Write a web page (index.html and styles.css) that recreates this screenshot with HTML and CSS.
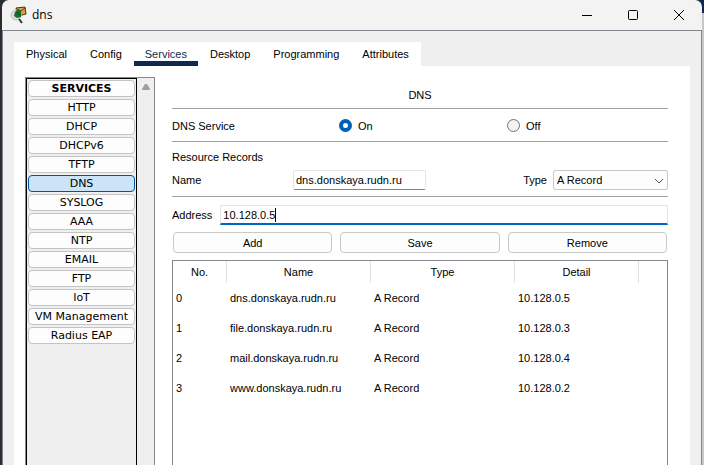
FILE: index.html
```html
<!DOCTYPE html>
<html lang="en">
<head>
<meta charset="utf-8">
<title>dns</title>
<link rel="stylesheet" href="styles.css">
</head>
<body>
<div class="window">
  <header class="titlebar">
    <svg class="app-icon" width="18" height="18" viewBox="0 0 18 18" aria-hidden="true">
      <path d="M6 2 15 1 16 8 8 10z" fill="#d9a33c" stroke="#4a3210"/>
      <path d="M6 3 11 5 15 2" fill="none" stroke="#5b3d12"/>
      <circle cx="6" cy="9" r="5" fill="#dcdedb" stroke="#c3c6c3"/>
      <path d="M5 6 8 3 11 5V11L7 12 4 10z" fill="#14712b"/>
      <path d="M7 6 10 9" stroke="#0b3f17"/>
      <path d="M9 13 12 17" stroke="#30343a" stroke-width="2"/>
    </svg>
    <span class="title">dns</span>
    <div class="controls">
      <button type="button" aria-label="Minimize"><svg width="12" height="12" viewBox="0 0 12 12"><path d="M1 6.5H11" stroke="#000"/></svg></button>
      <button type="button" aria-label="Maximize"><svg width="12" height="12" viewBox="0 0 12 12"><rect x="1.5" y="1.5" width="9" height="9" rx="1" fill="none" stroke="#000"/></svg></button>
      <button type="button" aria-label="Close"><svg width="12" height="12" viewBox="0 0 12 12"><path d="M1 1 11 11M11 1 1 11" stroke="#000"/></svg></button>
    </div>
  </header>
  <main class="client">
    <nav class="tabs">
      <button type="button">Physical</button>
      <button type="button">Config</button>
      <button type="button" class="active">Services</button>
      <button type="button">Desktop</button>
      <button type="button">Programming</button>
      <button type="button">Attributes</button>
    </nav>
    <section class="panel">
      <aside class="sidebar">
        <div class="services">
          <button type="button" class="heading">SERVICES</button>
          <button type="button">HTTP</button>
          <button type="button">DHCP</button>
          <button type="button">DHCPv6</button>
          <button type="button">TFTP</button>
          <button type="button" class="selected">DNS</button>
          <button type="button">SYSLOG</button>
          <button type="button">AAA</button>
          <button type="button">NTP</button>
          <button type="button">EMAIL</button>
          <button type="button">FTP</button>
          <button type="button">IoT</button>
          <button type="button">VM Management</button>
          <button type="button">Radius EAP</button>
        </div>
        <div class="scrollbar">
          <svg width="10" height="8" viewBox="0 0 10 8" aria-hidden="true"><path d="M4 1H6L9 6V7H1V6z" fill="#a0a0a0"/></svg>
        </div>
      </aside>
      <form class="dns">
        <h1>DNS</h1>
        <div class="service-row">
          <span>DNS Service</span>
          <label><input type="radio" name="service" checked>On</label>
          <label><input type="radio" name="service">Off</label>
        </div>
        <h2>Resource Records</h2>
        <div class="record-row">
          <label for="name">Name</label>
          <input class="field" id="name" type="text" value="dns.donskaya.rudn.ru">
          <label class="type-label" for="type">Type</label>
          <div class="select">
            <select id="type"><option>A Record</option></select>
            <svg width="10" height="6" viewBox="0 0 10 6" aria-hidden="true"><path d="M1 1 5 5 9 1" fill="none" stroke="#555"/></svg>
          </div>
        </div>
        <div class="address-row">
          <label for="address">Address</label>
          <div class="address-box">
            <input class="field focused" id="address" type="text" value="10.128.0.5">
            <span class="caret"></span>
          </div>
        </div>
        <div class="actions">
          <button type="button">Add</button>
          <button type="button">Save</button>
          <button type="button">Remove</button>
        </div>
        <div class="records">
          <table>
            <colgroup><col class="c-no"><col class="c-name"><col class="c-type"><col class="c-detail"><col></colgroup>
            <thead><tr><th>No.</th><th>Name</th><th>Type</th><th>Detail</th><td></td></tr></thead>
            <tbody>
              <tr><td>0</td><td>dns.donskaya.rudn.ru</td><td>A Record</td><td>10.128.0.5</td><td></td></tr>
              <tr><td>1</td><td>file.donskaya.rudn.ru</td><td>A Record</td><td>10.128.0.3</td><td></td></tr>
              <tr><td>2</td><td>mail.donskaya.rudn.ru</td><td>A Record</td><td>10.128.0.4</td><td></td></tr>
              <tr><td>3</td><td>www.donskaya.rudn.ru</td><td>A Record</td><td>10.128.0.2</td><td></td></tr>
            </tbody>
          </table>
        </div>
      </form>
    </section>
  </main>
</div>
</body>
</html>
```
FILE: styles.css
```css
* { box-sizing: border-box; }
body {
  margin: 0;
  height: 100vh;
  overflow: hidden;
  padding: 0 2px;
  background: linear-gradient(90deg, #2b2c30 50%, transparent 50%), linear-gradient(#10264c 13px, #c8c8cb 13px);
  color: #000;
  font: 11px/14px "Liberation Sans", Arial, sans-serif;
}
button, input, select { font: inherit; color: inherit; margin: 0; }
.window { height: 100%; display: flex; flex-direction: column; }
.titlebar {
  flex: none;
  height: 30px;
  display: flex;
  align-items: center;
  padding-left: 8px;
  background: #f3f3f3;
  border-radius: 7px 7px 0 0;
}
.title { margin-left: 4px; font: 12px/16px "Open Sans", sans-serif; }
.controls { margin-left: auto; display: flex; }
.controls button {
  width: 46px;
  height: 30px;
  padding: 0;
  border: 0;
  background: none;
  display: grid;
  place-items: center;
}
.client {
  flex: 1;
  min-height: 0;
  display: flex;
  flex-direction: column;
  padding: 11px 11px 0;
  background: #efefef;
  border: 1px solid #7f868e;
  border-bottom: 0;
}
.tabs { display: flex; gap: 1px; padding: 0 1px; align-self: flex-start; background: #fff; }
.tabs button {
  height: 24px;
  padding: 0 11px;
  border: 0;
  border-bottom: 5px solid transparent;
  border-top: 5px solid transparent;
  background: none;
}
.tabs .active { color: #10294f; border-bottom-color: #10294f; }
.panel {
  flex: 1;
  min-height: 0;
  display: flex;
  gap: 17px;
  padding: 11px 22px 0 11px;
  background: #fff;
}
.sidebar {
  flex: none;
  width: 130px;
  display: flex;
  background: #efefef;
  border: 1px solid #828790;
  border-bottom: 0;
}
.services {
  flex: 1;
  display: flex;
  flex-direction: column;
  gap: 2px;
  padding: 1px;
  border: 1px solid #000;
  border-bottom: 0;
}
.services button {
  height: 17px;
  padding: 1px 0 0;
  border: 1px solid #c4c4c4;
  border-radius: 4px;
  background: #fdfdfd;
  font: 11px/14px "DejaVu Sans", Verdana, sans-serif;
  white-space: nowrap;
}
.services .heading { font-weight: bold; }
.services .selected { background: #cce4f7; border-color: #0054a0; }
.scrollbar { width: 17px; display: flex; justify-content: center; padding-top: 5px; }
.dns { flex: 1; min-width: 0; display: flex; flex-direction: column; }
h1, h2 { margin: 0; font: inherit; }
h1 { padding: 11px 0 6px; text-align: center; }
.service-row {
  display: grid;
  grid-template-columns: 167px 168px 1fr;
  align-items: center;
  height: 34px;
  padding-top: 1px;
  border: solid #a0a0a0;
  border-width: 1px 0;
}
.service-row label { display: flex; align-items: center; gap: 6px; }
input[type="radio"] {
  appearance: none;
  width: 13px;
  height: 13px;
  border: 1px solid #727272;
  border-radius: 50%;
  background: #f3f3f3;
}
input[type="radio"]:checked { border: 4px solid #005fb8; background: #fff; }
h2 { padding: 8px 0 6px; }
.record-row {
  display: flex;
  align-items: center;
  height: 27px;
  padding-bottom: 6px;
  border-bottom: 1px solid #a0a0a0;
}
.record-row > label:first-child { width: 121px; }
.type-label { margin-left: auto; margin-right: 6px; }
.field {
  height: 20px;
  width: 133px;
  padding: 0 2px;
  border: 1px solid #e5e5e5;
  border-bottom-color: #868686;
  border-radius: 2px;
  background: #fff;
  outline: 0;
}
.field.focused { display: block; width: 100%; border-bottom: 2px solid #0067c0; border-radius: 0; }
.select { position: relative; width: 115px; }
.select select {
  appearance: none;
  display: block;
  width: 100%;
  height: 20px;
  padding: 0 3px;
  border: 1px solid #c8c8c8;
  border-radius: 2px;
  background: #fdfdfd;
}
.select svg { position: absolute; right: 4px; top: 8px; }
.address-row { display: flex; align-items: center; gap: 8px; padding: 8px 0 7px; }
.address-box { position: relative; flex: 1; }
.caret { position: absolute; left: 55px; top: 3px; width: 1px; height: 14px; background: #000; }
.actions { display: grid; grid-template-columns: repeat(3, 1fr); gap: 8px; padding: 0 1px 7px; }
.actions button {
  height: 21px;
  padding: 0;
  border: 1px solid #c8c8c8;
  border-radius: 4px;
  background: #fdfdfd;
}
.records { flex: 1; border: 1px solid #828790; border-bottom: 0; }
table { width: 100%; table-layout: fixed; border-collapse: separate; border-spacing: 0; }
.c-no { width: 54px; }
.c-name, .c-type { width: 144px; }
.c-detail { width: 124px; }
th { height: 22px; padding: 0; font-weight: normal; border-right: 1px solid #e0e0e0; }
tbody td { height: 30px; padding: 0 3px; white-space: nowrap; }
```
